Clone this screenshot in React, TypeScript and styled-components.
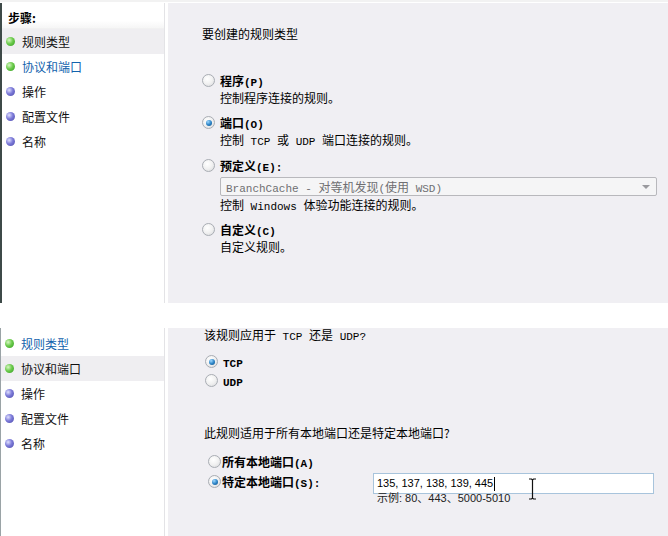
import React, { FC } from 'react';
import styled, { createGlobalStyle, css } from 'styled-components';

const GlobalStyle = createGlobalStyle`
  html, body {
    margin: 0;
    padding: 0;
    background: #ffffff;
  }
  body {
    font-family: 'Noto Sans CJK SC', sans-serif;
    font-size: 12px;
    color: #000;
  }
`;

const Page = styled.div`
  width: 668px;
  height: 536px;
  overflow: hidden;
  border-top: 2px solid #f2f2f2;
  box-sizing: border-box;
`;

const Panel = styled.div<{ $top?: boolean }>`
  display: flex;
  height: ${(p) => (p.$top ? '300px' : '208px')};
  margin-top: ${(p) => (p.$top ? '1px' : '25px')};
`;

const Sidebar = styled.div<{ $dark?: boolean }>`
  width: 168px;
  flex: none;
  box-sizing: border-box;
  background: #fff;
  border-left: ${(p) => (p.$dark ? '2px solid #3e4a48' : '1px solid #9aa3a6')};
  box-shadow: inset -3px 0 0 #fff, inset -4px 0 0 #e3e3e6;
  padding-right: 4px;
`;

const StepsHeader = styled.div`
  height: 26px;
  box-sizing: border-box;
  padding: 5px 0 0 6px;
  line-height: 20px;
  font-weight: 700;
  background: linear-gradient(#fff 70%, #f6f6f6);
  border-bottom: 1px solid #f1f1f1;
`;

const StepItem = styled.div<{ $current?: boolean; $link?: boolean }>`
  display: flex;
  align-items: center;
  height: 25px;
  gap: 7px;
  padding-left: 4px;
  background: ${(p) => (p.$current ? '#efeef1' : 'transparent')};
  color: ${(p) => (p.$link ? '#1262ad' : '#111')};
`;

const Bullet = styled.span<{ $done?: boolean }>`
  width: 9px;
  height: 9px;
  border-radius: 50%;
  flex: none;
  ${(p) =>
    p.$done
      ? css`
          background: radial-gradient(circle at 35% 35%, #d8f7c4 0, #6ccb4c 45%, #2f9a1e 100%);
        `
      : css`
          background: radial-gradient(circle at 35% 35%, #e0e0ff 0, #7c7ad8 45%, #4a48a8 100%);
        `}
`;

const Main = styled.div<{ $pad: string }>`
  flex: 1;
  background: #f0eff3;
  padding: ${(p) => p.$pad};
  line-height: 17px;
  position: relative;
`;

// Latin runs are narrower, like the half-width glyphs of the original UI font
const Lat = styled.span`
  font-family: 'Liberation Mono', monospace;
  font-size: 11px;
  line-height: 0;
`;

const Question = styled.div<{ $mt?: number }>`
  margin-top: ${(p) => p.$mt ?? 0}px;
`;

const Option = styled.div<{ $mt?: number; $indent?: number; $col?: number }>`
  display: grid;
  grid-template-columns: ${(p) => p.$col ?? 18}px 1fr;
  margin-top: ${(p) => p.$mt ?? 0}px;
  margin-left: ${(p) => p.$indent ?? 0}px;
`;

const RadioCell = styled.div`
  display: flex;
  align-items: center;
  height: 17px;
`;

const Radio = styled.span<{ $checked?: boolean }>`
  width: 11px;
  height: 11px;
  border-radius: 50%;
  border: 1px solid #a9adb3;
  background: radial-gradient(circle at 40% 35%, #ffffff 0, #f1f1f1 50%, #d6d7da 100%);
  display: flex;
  align-items: center;
  justify-content: center;
  &::after {
    content: '';
    display: ${(p) => (p.$checked ? 'block' : 'none')};
    width: 6px;
    height: 6px;
    border-radius: 50%;
    background: radial-gradient(circle at 35% 30%, #9fd8ff 0, #2f86c8 50%, #0d4d86 100%);
  }
`;

const Label = styled.div`
  font-weight: 700;
`;

const Desc = styled.div`
  grid-column: 2;
`;

const Select = styled.div`
  grid-column: 2;
  margin-top: 3px;
  height: 19px;
  box-sizing: border-box;
  border: 1px solid #b8b8bc;
  border-radius: 2px;
  background: #f5f5f6;
  color: #6f6f72;
  display: flex;
  align-items: center;
  justify-content: space-between;
  padding: 0 6px 0 5px;
`;

const Arrow = styled.span`
  width: 0;
  height: 0;
  border-left: 4px solid transparent;
  border-right: 4px solid transparent;
  border-top: 4px solid #9a9a9e;
`;

const PortRow = styled.div`
  display: flex;
  align-items: flex-start;
  margin-top: 2px;
`;

const PortOption = styled(Option)`
  width: 165px;
  padding-top: 1px;
  flex: none;
`;

const PortField = styled.div`
  display: flex;
  flex-direction: column;
  margin-top: 1px;
`;

const Input = styled.div`
  width: 281px;
  height: 21px;
  box-sizing: border-box;
  border: 1px solid #a8c4dc;
  background: #fff;
  font-family: 'Liberation Sans', sans-serif;
  font-size: 11px;
  display: flex;
  align-items: center;
  padding-left: 3px;
`;

const Caret = styled.span`
  display: inline-block;
  width: 1px;
  height: 14px;
  background: #000;
  margin-left: 1px;
`;

const Example = styled.div`
  font-family: 'Liberation Sans', 'Noto Sans CJK SC', sans-serif;
  font-size: 11px;
  padding-left: 4px;
  line-height: 17px;
  margin-top: -4px;
  color: #222;
`;

const IBeam = styled.svg`
  position: absolute;
  left: 360px;
  top: 150px;
`;

const steps = ['规则类型', '协议和端口', '操作', '配置文件', '名称'];

const StepList: FC<{ current: number; link?: number }> = ({ current, link }) => (
  <>
    {steps.map((s, i) => (
      <StepItem key={s} $current={i === current} $link={i === link}>
        <Bullet $done={i < 2} />
        {s}
      </StepItem>
    ))}
  </>
);

const RadioOption: FC<{
  checked?: boolean;
  label: React.ReactNode;
  desc?: React.ReactNode;
  mt?: number;
  indent?: number;
  col?: number;
  children?: React.ReactNode;
}> = ({ checked, label, desc, mt, indent, col, children }) => (
  <Option $mt={mt} $indent={indent} $col={col}>
    <RadioCell>
      <Radio $checked={checked} />
    </RadioCell>
    <Label>{label}</Label>
    {children}
    {desc && <Desc>{desc}</Desc>}
  </Option>
);

export default function App() {
  return (
    <Page>
      <GlobalStyle />
      <Panel $top>
        <Sidebar $dark>
          <StepsHeader>步骤:</StepsHeader>
          <StepList current={0} link={1} />
        </Sidebar>
        <Main $pad="22px 11px 0 34px">
          <Question>要创建的规则类型</Question>
          <RadioOption mt={30} label={<>程序<Lat>(P)</Lat></>} desc="控制程序连接的规则。" />
          <RadioOption
            mt={8}
            checked
            label={<>端口<Lat>(O)</Lat></>}
            desc={<>控制<Lat> TCP </Lat>或<Lat> UDP </Lat>端口连接的规则。</>}
          />
          <RadioOption mt={9} label={<>预定义<Lat>(E):</Lat></>}>
            <Select>
              <span>
                <Lat>BranchCache - </Lat>对等机发现<Lat>(</Lat>使用<Lat> WSD)</Lat>
              </span>
              <Arrow />
            </Select>
            <Desc>
              控制<Lat> Windows </Lat>体验功能连接的规则。
            </Desc>
          </RadioOption>
          <RadioOption mt={8} label={<>自定义<Lat>(C)</Lat></>} desc="自定义规则。" />
        </Main>
      </Panel>
      <Panel>
        <Sidebar>
          <div style={{ height: 3 }} />
          <StepList current={1} link={0} />
        </Sidebar>
        <Main $pad="0 14px 0 36px">
          <Question $mt={-2}>
            该规则应用于<Lat> TCP </Lat>还是<Lat> UDP?</Lat>
          </Question>
          <RadioOption mt={10} indent={1} checked label={<Lat>TCP</Lat>} />
          <RadioOption mt={2} indent={1} label={<Lat>UDP</Lat>} />
          <Question $mt={35}>此规则适用于所有本地端口还是特定本地端口?</Question>
          <RadioOption mt={12} indent={4} col={14} label={<>所有本地端口<Lat>(A)</Lat></>} />
          <PortRow>
            <PortOption $indent={4} $col={14}>
              <RadioCell>
                <Radio $checked />
              </RadioCell>
              <Label>
                特定本地端口<Lat>(S):</Lat>
              </Label>
            </PortOption>
            <PortField>
              <Input>
                135, 137, 138, 139, 445
                <Caret />
              </Input>
              <Example>示例: 80、443、5000-5010</Example>
            </PortField>
          </PortRow>
          <IBeam width="9" height="22" viewBox="0 0 9 22">
            <path d="M1 1h2.5l1 1 1-1H8M4.5 2v18M1 21h2.5l1-1 1 1H8" fill="none" stroke="#111" strokeWidth="1.2" />
          </IBeam>
        </Main>
      </Panel>
    </Page>
  );
}
